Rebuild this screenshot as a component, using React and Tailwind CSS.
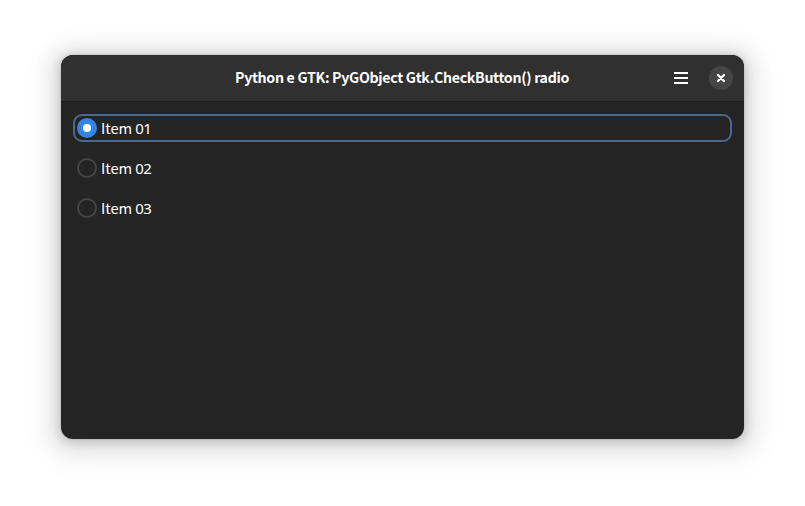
const items = [
  { name: "Item", number: "01" },
  { name: "Item", number: "02" },
  { name: "Item", number: "03" },
];

function Radio({ name, number, checked }) {
  return (
    <label
      className={`flex h-7 items-center gap-1 rounded-[9px] border-2 px-0.5 ${
        checked ? "border-[#4a688f]" : "border-transparent"
      }`}
    >
      <span
        className={`flex size-5 items-center justify-center rounded-full ${
          checked ? "bg-[#3584e4]" : "border-2 border-[#454545]"
        }`}
      >
        {checked && <span className="size-2 rounded-full bg-white" />}
      </span>
      <span className="-mt-px text-[14.7px] leading-5 tracking-[-0.1px] text-white">
        {name} <span className="font-['Noto_Sans',sans-serif] text-[15px] tracking-[-0.6px]">{number}</span>
      </span>
    </label>
  );
}

export default function App() {
  return (
    <div className="h-[506px] w-[805px] overflow-hidden bg-white pt-[55px] pl-[61px] font-['Noto_Sans_CJK_SC','Noto_Sans',sans-serif]">
      <div className="flex h-[384px] w-[683px] flex-col overflow-hidden rounded-xl bg-[#242424] shadow-[0_2px_8px_2px_rgba(0,0,0,0.13),0_3px_20px_10px_rgba(0,0,0,0.09),0_6px_32px_16px_rgba(0,0,0,0.04),0_0_0_1px_rgba(0,0,0,0.05)]">
        <header className="grid h-[47px] grid-cols-[1fr_auto_1fr] items-center border-b border-[#1e1e1e] bg-[#303030] px-[11px]">
          <span />
          <h1 className="-ml-px text-[14.2px] font-bold tracking-[-0.32px] whitespace-nowrap text-white">
            Python e GTK: PyGObject Gtk.CheckButton() radio
          </h1>
          <div className="flex items-center justify-end gap-5">
            <svg width="16" height="16" viewBox="0 0 16 16" fill="#fff">
              <path d="M1 2h14v2H1zM1 7h14v2H1zM1 12h14v2H1z" />
            </svg>
            <button className="flex size-6 items-center justify-center rounded-full bg-[#454545]">
              <svg width="16" height="16" viewBox="0 0 16 16" stroke="#fff" strokeWidth="2.4" strokeLinecap="round">
                <path d="M5 5l6 6M11 5l-6 6" />
              </svg>
            </button>
          </div>
        </header>
        <main className="flex flex-col gap-3 p-3">
          {items.map((item, i) => (
            <Radio key={item.number} name={item.name} number={item.number} checked={i === 0} />
          ))}
        </main>
      </div>
    </div>
  );
}
